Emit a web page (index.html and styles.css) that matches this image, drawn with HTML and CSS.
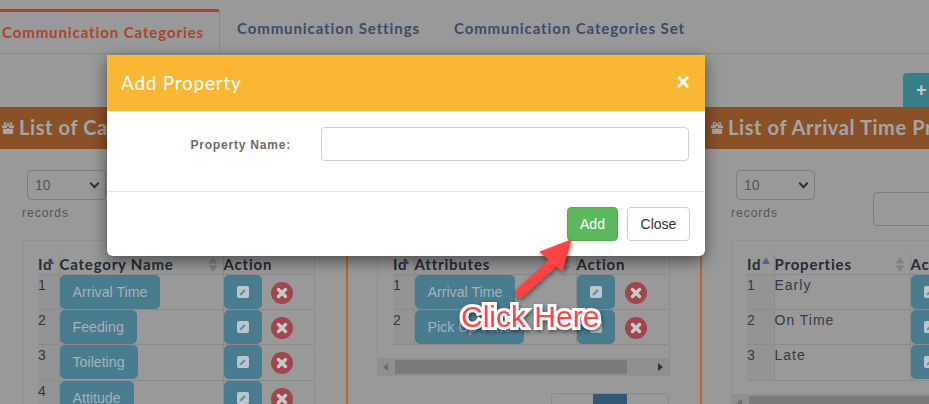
FILE: index.html
```html
<!DOCTYPE html>
<html lang="en">
<head>
  <meta charset="UTF-8">
  <title>Communication Categories</title>
  <link rel="stylesheet" href="styles.css">
</head>
<body>
  <svg class="icon-defs" width="0" height="0">
    <symbol id="gift" viewBox="0 0 12 12">
      <path d="M0 3.6h12v2.6H0zM.9 6.9h4.2V12H2a1.1 1.1 0 0 1-1.1-1.1zM6.9 6.9h4.2v4a1.1 1.1 0 0 1-1.1 1.1H6.9zM5.1 3.6V12h1.8V3.6z" fill="currentColor"/>
      <path d="M6 3.4C5 1.2 3.8.5 3 .7c-1 .3-1 2.2.3 2.7zM6 3.4C7 1.2 8.2.5 9 .7c1 .3 1 2.2-.3 2.7z" fill="none" stroke="currentColor" stroke-width="1.2"/>
    </symbol>
    <symbol id="pencil" viewBox="0 0 12 12">
      <rect width="12" height="12" rx="2" fill="#bcc6ca"/>
      <path d="M2.600 9.400l.4-1.900 4.200-4.200 1.500 1.500-4.200 4.200z" fill="#5f8ea3"/>
    </symbol>
    <symbol id="remove" viewBox="0 0 22 22">
      <circle cx="11" cy="11" r="11" fill="#a0464f"/>
      <path d="M7.500 7.500l7 7M14.500 7.500l-7 7" stroke="#c9c9c9" stroke-width="3.400" stroke-linecap="round"/>
    </symbol>
  </svg>

  <div class="page">
    <ul class="tabs">
      <li class="tab active">Communication Categories</li>
      <li class="tab">Communication Settings</li>
      <li class="tab">Communication Categories Set</li>
    </ul>

    <div class="toolbar">
      <button class="add-new">+ Add New</button>
    </div>

    <div class="panels">
      <section class="panel">
        <h2 class="panel-title"><svg class="gift"><use href="#gift"/></svg> List of Categories</h2>
        <div class="filters">
          <div class="length">
            <div class="select">10 <span class="chev"></span></div>
            <div class="records">records</div>
          </div>
        </div>
        <div class="table-box">
          <table class="grid col-left">
            <thead><tr><th class="id">Id<span class="sort-up"></span></th><th class="name">Category Name<span class="sort"></span></th><th>Action</th></tr></thead>
            <tbody>
              <tr><td class="id">1</td><td><a class="pill">Arrival Time</a></td><td class="acts"><a class="edit"><svg><use href="#pencil"/></svg></a><svg class="del"><use href="#remove"/></svg></td></tr>
              <tr><td class="id">2</td><td><a class="pill">Feeding</a></td><td class="acts"><a class="edit"><svg><use href="#pencil"/></svg></a><svg class="del"><use href="#remove"/></svg></td></tr>
              <tr><td class="id">3</td><td><a class="pill">Toileting</a></td><td class="acts"><a class="edit"><svg><use href="#pencil"/></svg></a><svg class="del"><use href="#remove"/></svg></td></tr>
              <tr><td class="id">4</td><td><a class="pill">Attitude</a></td><td class="acts"><a class="edit"><svg><use href="#pencil"/></svg></a><svg class="del"><use href="#remove"/></svg></td></tr>
            </tbody>
          </table>
        </div>
      </section>

      <section class="panel">
        <h2 class="panel-title"><svg class="gift"><use href="#gift"/></svg> List of Attributes</h2>
        <div class="filters">
          <div class="length">
            <div class="select">10 <span class="chev"></span></div>
            <div class="records">records</div>
          </div>
        </div>
        <div class="table-box">
          <table class="grid col-mid">
            <thead><tr><th class="id">Id<span class="sort-up"></span></th><th class="name">Attributes<span class="sort"></span></th><th>Action</th></tr></thead>
            <tbody>
              <tr><td class="id">1</td><td><a class="pill">Arrival Time</a></td><td class="acts"><a class="edit"><svg><use href="#pencil"/></svg></a><svg class="del"><use href="#remove"/></svg></td></tr>
              <tr><td class="id">2</td><td><a class="pill">Pick Up Time</a></td><td class="acts"><a class="edit"><svg><use href="#pencil"/></svg></a><svg class="del"><use href="#remove"/></svg></td></tr>
            </tbody>
          </table>
          <div class="hscroll"><span class="arrow-l"></span><span class="thumb"></span><span class="arrow-r"></span></div>
        </div>
        <div class="pager"><span></span><span class="current"></span><span></span></div>
      </section>

      <section class="panel">
        <h2 class="panel-title"><svg class="gift"><use href="#gift"/></svg> List of Arrival Time Properties</h2>
        <div class="filters">
          <div class="length">
            <div class="select">10 <span class="chev"></span></div>
            <div class="records">records</div>
          </div>
          <div class="search"></div>
        </div>
        <div class="table-box">
          <table class="grid col-right">
            <thead><tr><th class="id">Id<span class="sort-up"></span></th><th class="name">Properties<span class="sort"></span></th><th>Action</th></tr></thead>
            <tbody>
              <tr><td class="id">1</td><td>Early</td><td class="acts"><a class="edit"><svg><use href="#pencil"/></svg></a></td></tr>
              <tr><td class="id">2</td><td>On Time</td><td class="acts"><a class="edit"><svg><use href="#pencil"/></svg></a></td></tr>
              <tr><td class="id">3</td><td>Late</td><td class="acts"><a class="edit"><svg><use href="#pencil"/></svg></a></td></tr>
            </tbody>
          </table>
          <div class="hscroll"><span class="arrow-l"></span><span class="thumb"></span></div>
        </div>
      </section>
    </div>
  </div>

  <div class="modal">
    <div class="modal-header">
      <h3>Add Property</h3>
      <span class="close-x">&times;</span>
    </div>
    <div class="modal-body">
      <label class="field-label">Property Name:</label>
      <div class="field-input"></div>
    </div>
    <div class="modal-footer">
      <button class="btn btn-add">Add</button>
      <button class="btn btn-close">Close</button>
    </div>
  </div>

  <svg class="callout-arrow" width="80" height="80" viewBox="0 0 80 80">
    <path d="M11 61L44 31" stroke="#ff4343" stroke-width="10" stroke-linecap="round"/>
    <path d="M62 8L31 20L53 39z" fill="#ff4343" stroke="#ff4343" stroke-linejoin="round"/>
  </svg>
  <div class="callout-text">Click Here</div>
</body>
</html>
```

FILE: styles.css
```css
* {
  margin: 0;
  padding: 0;
  box-sizing: border-box;
}

body {
  width: 929px;
  height: 404px;
  overflow: hidden;
  position: relative;
  background-color: #999;
  font-family: "Liberation Sans", Arial, sans-serif;
  color: #2f3640;
}

.icon-defs {
  position: absolute;
}

.page {
  height: 404px;
  overflow: hidden;
}

.tabs {
  display: flex;
  list-style: none;
  height: 54px;
  padding-top: 9px;
  border-bottom: 1px solid #8a8a8a;
  font-family: Lato, sans-serif;
  font-size: 15px;
  font-weight: 700;
  letter-spacing: 0.9px;
  color: #3d4a6b;
}

.tab {
  padding: 10px 17px 0;
  white-space: nowrap;
}

.tab.active {
  width: 220px;
  padding: 11px 0 0 2px;
  border-top: 3px solid #a9452c;
  border-right: 1px solid #8a8a8a;
  border-top-right-radius: 3px;
  color: #a9452c;
}

.toolbar {
  display: flex;
  justify-content: flex-end;
  height: 53px;
  padding-top: 19px;
  margin-right: -40px;
}

.add-new {
  width: 66px;
  height: 34px;
  border: 0;
  border-radius: 4px 4px 0 0;
  background-color: #37808a;
  color: #c9c9c9;
  font-size: 18px;
  font-weight: 700;
  text-align: left;
  padding-left: 13px;
  white-space: nowrap;
  overflow: hidden;
}

.panels {
  display: grid;
  grid-template-columns: repeat(3, 354px);
  margin-left: -8px;
}

.panel {
  height: 300px;
  border-left: 2px solid #b5672f;
}

.panel:first-child {
  border-left: 0;
}

.panel-title {
  display: flex;
  align-items: center;
  gap: 5px;
  height: 42px;
  padding: 0 0 3px 9px;
  background-color: #8a5129;
  color: #a5a5a5;
  font-family: Lato, sans-serif;
  font-size: 20px;
  font-weight: 700;
  letter-spacing: 0.6px;
  white-space: nowrap;
  overflow: hidden;
}

.panel:first-child .panel-title {
  padding-left: 10px;
}

.gift {
  flex-shrink: 0;
  width: 12px;
  height: 12px;
  margin-top: 3px;
}

.filters {
  display: flex;
  justify-content: space-between;
  height: 91px;
  padding: 21px 0 0 35px;
}

.panel:nth-child(3) .filters {
  padding-left: 34px;
}

.select {
  display: flex;
  justify-content: space-between;
  align-items: center;
  width: 79px;
  height: 30px;
  padding: 0 6px 0 7px;
  border: 1px solid #7f7f7f;
  border-radius: 4px;
  font-size: 14px;
  color: #555;
}

.chev {
  width: 7px;
  height: 7px;
  margin: -3px 1px 0 0;
  border-right: 2px solid #333;
  border-bottom: 2px solid #333;
  transform: rotate(45deg);
}

.records {
  margin: 6px 0 0 -5px;
  font-size: 12px;
  letter-spacing: 1px;
  color: #555;
}

.search {
  width: 181px;
  height: 34px;
  margin-top: 22px;
  border: 1px solid #7f7f7f;
  border-radius: 4px;
}

.table-box {
  margin-left: 29px;
  width: 293px;
  padding: 13px 0 0 15px;
  border: 1px solid #8f8f8f;
  border-bottom: 0;
  overflow: hidden;
}

.panel:first-child .table-box {
  margin-left: 30px;
}

.panel:nth-child(3) .table-box {
  width: 400px;
}

.grid {
  border-collapse: collapse;
  table-layout: fixed;
  font-size: 14px;
  letter-spacing: 0.5px;
}

.grid.col-left {
  width: 276px;
}

.grid.col-mid {
  width: 275px;
}

.grid.col-right {
  width: 400px;
}

.grid th {
  position: relative;
  height: 20px;
  padding: 0;
  border-left: 1px solid #8a8a8a;
  border-bottom: 1px solid #8a8a8a;
  font-family: Lato, sans-serif;
  font-size: 15px;
  letter-spacing: 0.8px;
  text-align: left;
  color: #262b36;
  white-space: nowrap;
}

.grid th.id {
  border-left: 0;
  width: 21px;
  overflow: hidden;
}

.col-left th.name {
  width: 164px;
}

.col-mid th.name {
  width: 162px;
}

.col-right th.id {
  width: 27px;
}

.col-right th.name {
  width: 136px;
}

.grid td {
  height: 35px;
  padding: 0;
  border-left: 1px solid #8a8a8a;
  border-bottom: 1px solid #8a8a8a;
  vertical-align: top;
}

.grid tr:nth-child(3) td {
  height: 36px;
}

.col-right td {
  padding-top: 2px;
  letter-spacing: 1px;
  color: #333b48;
}

.col-right td.acts {
  padding-top: 0;
}

.grid td.id {
  border-left: 0;
  padding-top: 2px;
  background-color: #949494;
}

.sort {
  position: absolute;
  right: 5px;
  top: 3px;
  width: 9px;
  height: 15px;
  background-color: #818181;
  clip-path: polygon(50% 0, 100% 44%, 50% 44%, 50% 56%, 100% 56%, 50% 100%, 0 56%, 50% 56%, 50% 44%, 0 44%);
}

.sort-up {
  position: absolute;
  right: 5px;
  top: 4px;
  border: 3px solid transparent;
  border-top: 0;
  border-bottom: 6px solid #3d4a78;
}

.col-right .sort-up {
  right: 4px;
  top: 3px;
  border-width: 0 4px 7px;
  border-bottom-color: #5f5f96;
}

.pill {
  display: inline-block;
  height: 34px;
  padding: 0 13px;
  border-radius: 5px;
  background-color: #4a7c90;
  color: #a3b3b9;
  font-size: 14.200px;
  line-height: 35px;
  letter-spacing: 0;
}

.acts {
  white-space: nowrap;
}

.edit {
  display: inline-flex;
  align-items: center;
  justify-content: center;
  width: 38px;
  height: 34px;
  border-radius: 5px;
  background-color: #4a7c90;
  vertical-align: top;
}

.edit svg {
  width: 12px;
  height: 12px;
}

.del {
  width: 22px;
  height: 22px;
  margin: 7px 0 0 9px;
  vertical-align: top;
}

.col-mid .del {
  margin-left: 10px;
}

.hscroll {
  position: relative;
  height: 18px;
  margin: 13px 0 0 -15px;
  background-color: #8f8f8f;
}

.thumb {
  position: absolute;
  left: 17px;
  right: 42px;
  top: 2px;
  height: 14px;
  background-color: #7a7a7a;
}

.arrow-l,
.arrow-r {
  position: absolute;
  top: 5px;
  border: 4px solid transparent;
}

.arrow-l {
  left: 5px;
  border-right: 5px solid #6b6b6b;
  border-left: 0;
}

.arrow-r {
  right: 6px;
  border-left: 5px solid #333;
  border-right: 0;
}

.pager {
  display: flex;
  width: 118px;
  height: 40px;
  margin: 17px 0 0 203px;
  border: 1px solid #8a8a8a;
  border-radius: 4px;
}

.pager span {
  width: 41px;
}

.pager .current {
  width: 34px;
  background-color: #325878;
}

.modal {
  position: absolute;
  left: 107px;
  top: 55px;
  width: 598px;
  height: 201px;
  border-radius: 0 0 6px 6px;
  background-color: #fff;
  box-shadow: 0 5px 15px rgba(0, 0, 0, 0.5);
}

.modal-header {
  display: flex;
  justify-content: space-between;
  align-items: center;
  height: 56px;
  padding: 0 15px 2px 14px;
  background-color: #f9b733;
  color: #fff;
}

.modal-header h3 {
  font-family: Lato, sans-serif;
  font-size: 19px;
  font-weight: 400;
  letter-spacing: 0.75px;
}

.close-x {
  font-size: 23px;
  font-weight: 700;
}

.modal-body {
  display: flex;
  height: 81px;
  padding-top: 16px;
  border-bottom: 1px solid #e5e5e5;
}

.field-label {
  width: 184px;
  padding-top: 11px;
  font-size: 12px;
  font-weight: 700;
  letter-spacing: 0.8px;
  text-align: right;
  color: #6b6b6b;
}

.field-input {
  width: 368px;
  height: 34px;
  margin-left: 30px;
  border: 1px solid #ccc;
  border-radius: 4px;
}

.modal-footer {
  display: flex;
  justify-content: flex-end;
  gap: 9px;
  padding: 15px 15px 0;
}

.btn {
  height: 34px;
  border-radius: 4px;
  font-family: "Liberation Sans", Arial, sans-serif;
  font-size: 14px;
}

.btn-add {
  width: 51px;
  border: 1px solid #4cae4c;
  background-color: #5cb85c;
  color: #fff;
}

.btn-close {
  width: 63px;
  border: 1px solid #ccc;
  background-color: #fff;
  color: #333;
}

.callout-arrow {
  position: absolute;
  left: 509px;
  top: 232px;
  filter: drop-shadow(1px 2px 2px rgba(0, 0, 0, 0.45));
}

.callout-text {
  position: absolute;
  left: 461px;
  top: 300px;
  font-size: 30px;
  line-height: 34px;
  color: #ff4343;
  -webkit-text-stroke: 6px #fff;
  paint-order: stroke fill;
  filter: drop-shadow(1px 2px 2px rgba(0, 0, 0, 0.5));
  white-space: nowrap;
}
```
